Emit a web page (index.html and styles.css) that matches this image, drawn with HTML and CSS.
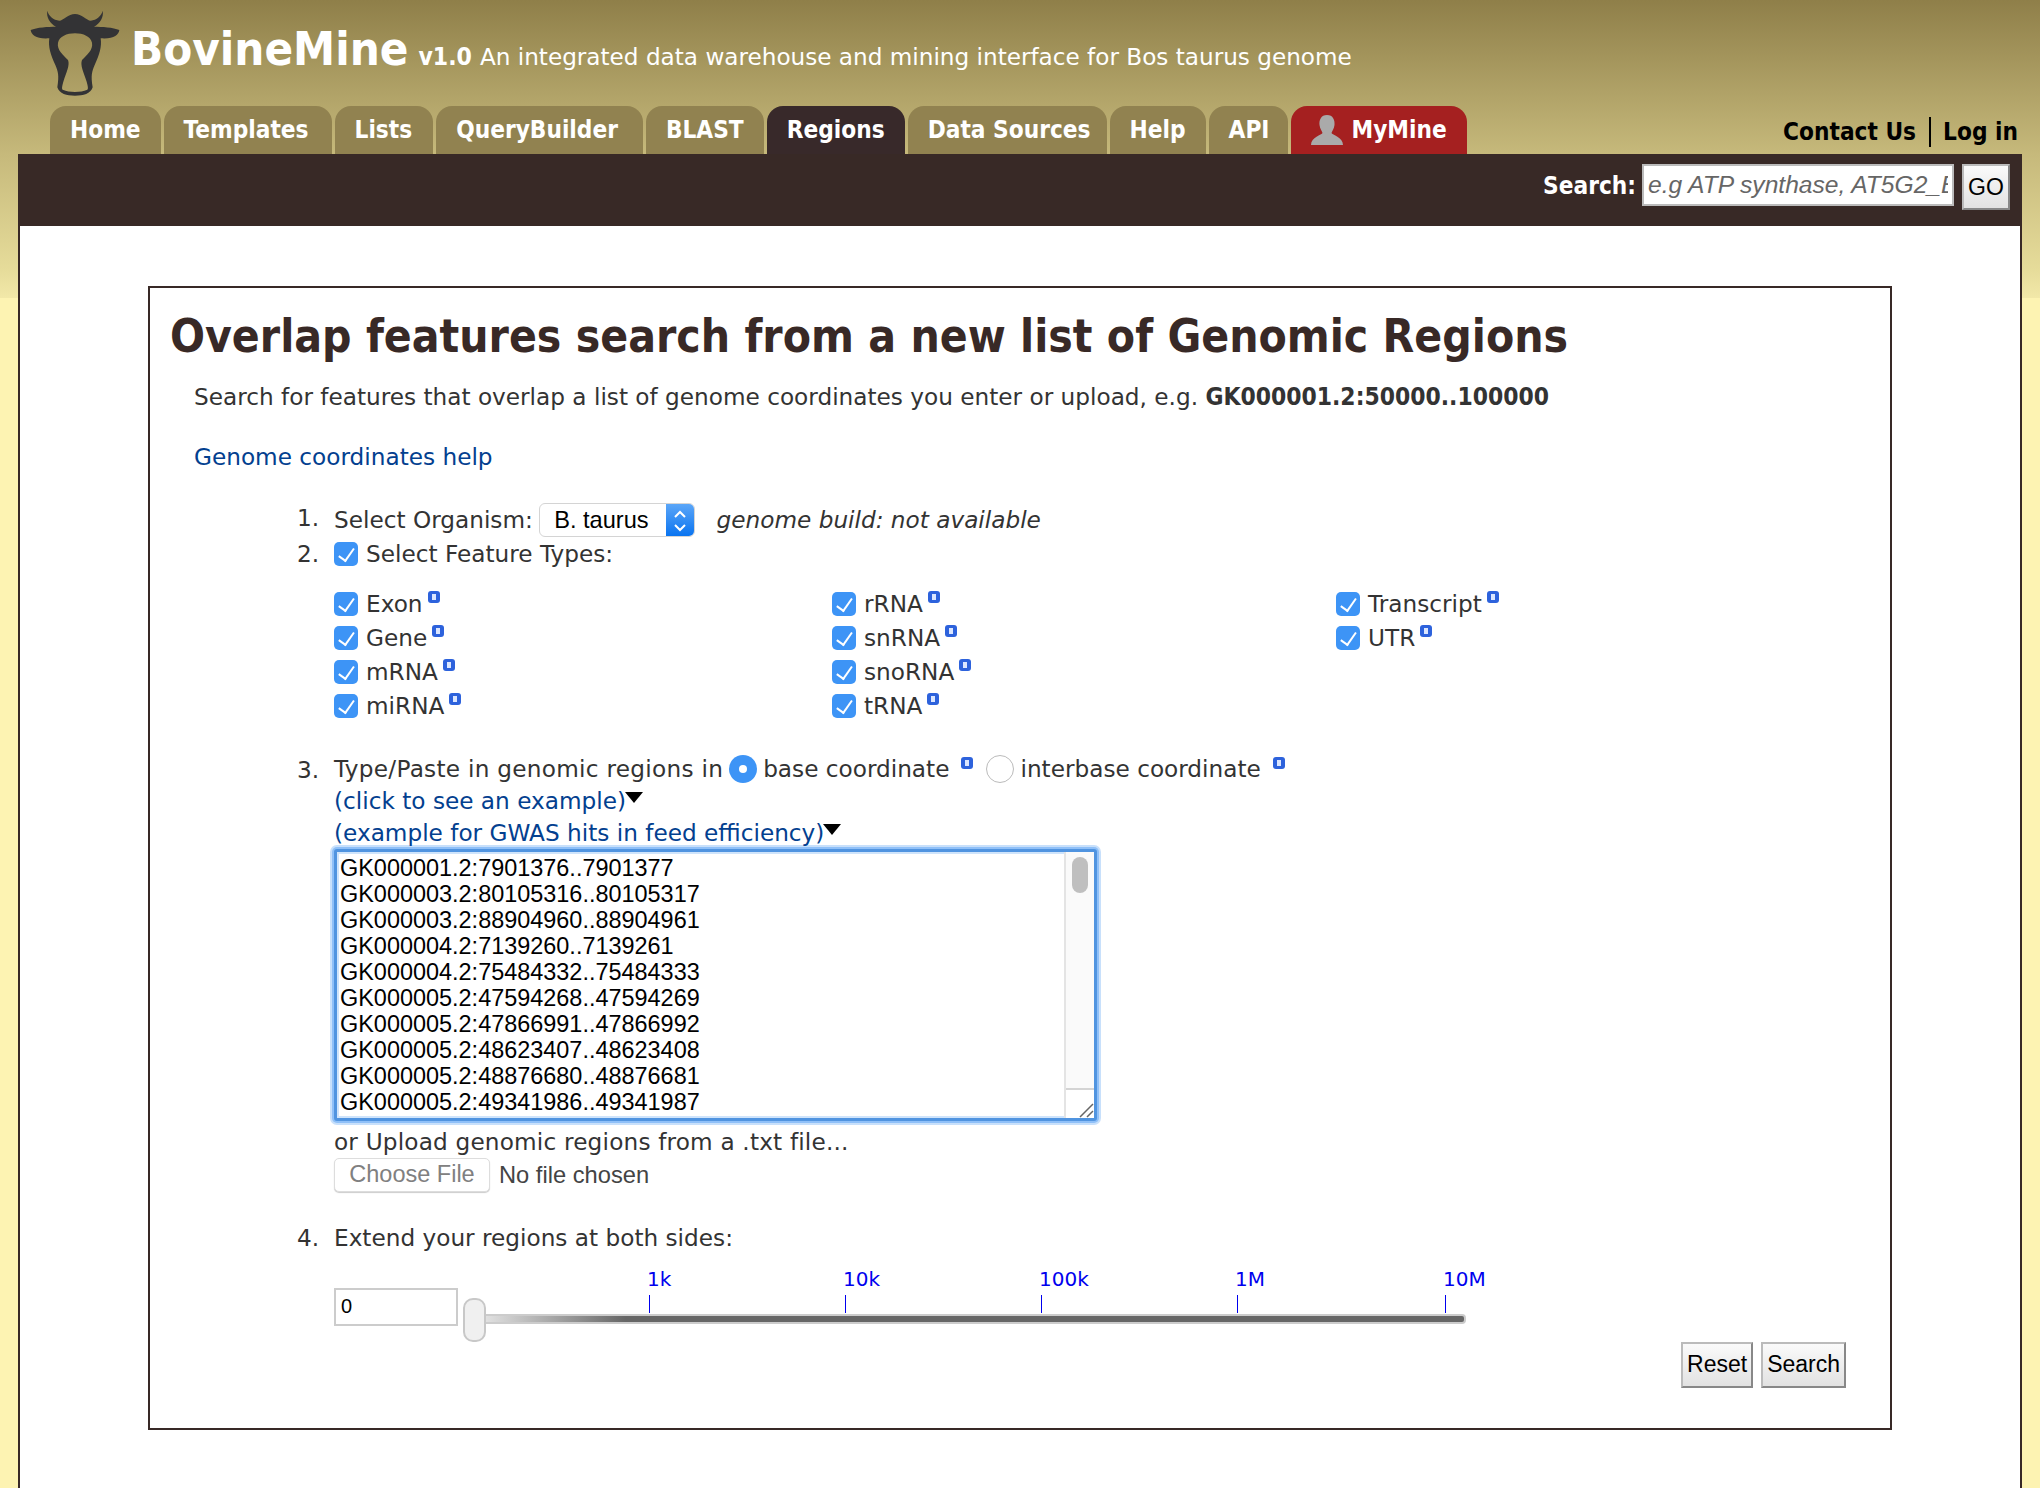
FILE: index.html
```html
<!DOCTYPE html>
<html lang="en">
<head>
    <meta charset="UTF-8">
    <title>BovineMine: Regions</title>
    <link rel="stylesheet" href="styles.css">
</head>
<body>
    <header class="brand">
        <svg class="logo" viewBox="90 30 270 258" aria-label="BovineMine logo">
            <path fill-rule="evenodd" fill="#333335" d="M142 32C146 48 160 60 178 62C190 62 205 42 225 42C245 42 260 62 272 62C290 60 304 48 308 32C312 52 300 70 282 80C305 80 340 82 358 90C356 105 340 118 302 115C306 140 298 165 284 195C276 215 272 225 278 262C272 282 250 287 225 287C200 287 178 282 172 262C178 225 174 215 166 195C152 165 144 140 148 115C110 118 94 105 92 90C110 82 145 80 168 80C150 70 138 52 142 32ZM225 100C200 100 178 110 174 128C170 150 190 165 204 180C210 195 200 215 190 245C186 260 184 268 190 270C205 278 245 278 260 270C266 268 264 260 260 245C250 215 240 195 246 180C260 165 280 150 276 128C272 110 250 100 225 100Z"/>
        </svg>
        <h1 class="site-name">BovineMine</h1>
        <span class="version">v1.0</span>
        <span class="tagline">An integrated data warehouse and mining interface for Bos taurus genome</span>
    </header>

    <nav class="nav-row">
        <ul id="tabs">
            <li><a href="#">Home</a></li>
            <li class="tab-templates"><a href="#">Templates</a></li>
            <li class="tab-lists"><a href="#">Lists</a></li>
            <li class="tab-qb"><a href="#">QueryBuilder</a></li>
            <li><a href="#">BLAST</a></li>
            <li class="active"><a href="#">Regions</a></li>
            <li class="tab-sources"><a href="#">Data Sources</a></li>
            <li><a href="#">Help</a></li>
            <li class="tab-api"><a href="#">API</a></li>
            <li class="mymine">
                <a href="#">
                    <svg class="user-icon" viewBox="0 0 32 30"><path fill="#aaa" d="M16 0C22 0 24 5 23.500 10C23 14 21 16 20.500 18C21 20 32 22 32 30H0C0 22 11 20 11.500 18C11 16 9 14 8.500 10C8 5 10 0 16 0Z"/></svg>
                    MyMine
                </a>
            </li>
        </ul>
        <div class="user-links">
            <a href="#" class="contact">Contact Us</a>
            <a href="#" class="login">Log in</a>
        </div>
    </nav>

    <div class="search-bar">
        <label for="quick">Search:</label>
        <input id="quick" type="text" value="e.g ATP synthase, AT5G2_BGIOSGA">
        <button class="btn go">GO</button>
    </div>

    <main class="content">
        <section class="panel">
            <h2>Overlap features search from a new list of Genomic Regions</h2>
            <p class="intro">Search for features that overlap a list of genome coordinates you enter or upload, e.g. <b>GK000001.2:50000..100000</b></p>
            <p class="help"><a href="#">Genome coordinates help</a></p>

            <ol class="steps">
                <li class="step-one">
                    <span>Select Organism:</span>
                    <div class="select">
                        <span class="select-text">B. taurus</span>
                        <span class="select-arrow">
                            <svg viewBox="0 0 28 34"><path d="M9 13L14 8L19 13M9 21L14 26L19 21" fill="none" stroke="#fff" stroke-width="2"/></svg>
                        </span>
                    </div>
                    <i>genome build: not available</i>
                </li>
                <li class="step-two">
                    <label class="check-row"><input type="checkbox" checked>Select Feature Types:</label>
                    <div class="features">
                        <div class="feature-col first">
                            <label class="check-row"><input type="checkbox" checked>Exon<span class="info"></span></label>
                            <label class="check-row"><input type="checkbox" checked>Gene<span class="info"></span></label>
                            <label class="check-row"><input type="checkbox" checked>mRNA<span class="info"></span></label>
                            <label class="check-row"><input type="checkbox" checked>miRNA<span class="info"></span></label>
                        </div>
                        <div class="feature-col second">
                            <label class="check-row"><input type="checkbox" checked>rRNA<span class="info"></span></label>
                            <label class="check-row"><input type="checkbox" checked>snRNA<span class="info"></span></label>
                            <label class="check-row"><input type="checkbox" checked>snoRNA<span class="info"></span></label>
                            <label class="check-row"><input type="checkbox" checked>tRNA<span class="info"></span></label>
                        </div>
                        <div class="feature-col">
                            <label class="check-row"><input type="checkbox" checked>Transcript<span class="info"></span></label>
                            <label class="check-row"><input type="checkbox" checked>UTR<span class="info"></span></label>
                        </div>
                    </div>
                </li>
                <li class="step-three">
                    <div class="coord-row">
                        <span class="coord-label">Type/Paste in genomic regions in</span>
                        <input class="radio" type="radio" name="coord" checked>
                        <span>base coordinate</span><span class="info wide"></span>
                        <input class="radio" type="radio" name="coord">
                        <span>interbase coordinate</span><span class="info wide"></span>
                    </div>
                    <div class="example"><a href="#">(click to see an example)</a><span class="arrow"></span></div>
                    <div class="example"><a href="#">(example for GWAS hits in feed efficiency)</a><span class="arrow"></span></div>
                    <div class="regions">
                        <div class="regions-text">
                            <div>GK000001.2:7901376..7901377</div>
                            <div>GK000003.2:80105316..80105317</div>
                            <div>GK000003.2:88904960..88904961</div>
                            <div>GK000004.2:7139260..7139261</div>
                            <div>GK000004.2:75484332..75484333</div>
                            <div>GK000005.2:47594268..47594269</div>
                            <div>GK000005.2:47866991..47866992</div>
                            <div>GK000005.2:48623407..48623408</div>
                            <div>GK000005.2:48876680..48876681</div>
                            <div>GK000005.2:49341986..49341987</div>
                        </div>
                        <div class="scroll">
                            <div class="scroll-track"><div class="scroll-thumb"></div></div>
                            <div class="resizer">
                                <svg viewBox="0 0 16 16"><path d="M2 15L15 2M9 15L15 9" stroke="#666" stroke-width="1.500"/></svg>
                            </div>
                        </div>
                    </div>
                    <div class="upload-text">or Upload genomic regions from a .txt file...</div>
                    <div class="upload">
                        <button class="choose" disabled>Choose File</button>
                        <span>No file chosen</span>
                    </div>
                </li>
                <li class="step-four">
                    <div>Extend your regions at both sides:</div>
                    <div class="slider">
                        <input class="extend" type="text" value="0">
                        <div class="track"></div>
                        <div class="handle"></div>
                        <div class="tick" style="left: 315px"><span>1k</span></div>
                        <div class="tick" style="left: 511px"><span>10k</span></div>
                        <div class="tick" style="left: 707px"><span>100k</span></div>
                        <div class="tick" style="left: 903px"><span>1M</span></div>
                        <div class="tick" style="left: 1111px"><span>10M</span></div>
                    </div>
                </li>
            </ol>

            <div class="actions">
                <button class="btn">Reset</button>
                <button class="btn">Search</button>
            </div>
        </section>
    </main>
</body>
</html>
```

FILE: styles.css
```css
* {
    box-sizing: border-box;
}
html, body {
    height: 100%;
}
body {
    margin: 0;
    height: 1488px;
    overflow: hidden;
    display: flex;
    flex-direction: column;
    background: linear-gradient(#8f7f49 0, #c6b97b 154px, #e6dc9a 270px, #f2e8a8 298px, #fdf3b2 298px);
    font-family: "DejaVu Sans", sans-serif;
    color: #333;
    font-size: 23.2px;
}
a {
    text-decoration: none;
}

/* top of page */
.brand {
    height: 106px;
    display: flex;
    align-items: baseline;
    padding: 18px 0 0 30px;
    color: #fff;
}
.logo {
    flex: none;
    align-self: flex-start;
    width: 90px;
    height: 86px;
    margin: -8px 11px 0 0;
}
.site-name {
    margin: 0;
    font-family: "DejaVu Sans Condensed", "DejaVu Sans", sans-serif;
    font-size: 47px;
    font-weight: bold;
    line-height: 62px;
}
.version {
    margin-left: 10px;
    font-family: "DejaVu Sans Condensed", "DejaVu Sans", sans-serif;
    font-size: 24.5px;
    font-weight: bold;
}
.tagline {
    margin-left: 8px;
    font-size: 23.15px;
}

.nav-row {
    height: 48px;
    display: flex;
    justify-content: space-between;
    padding: 0 22px 0 50px;
}
#tabs {
    display: flex;
    gap: 3px;
    margin: 0;
    padding: 0;
    list-style: none;
}
#tabs li {
    background: #918250;
    border-radius: 16px 16px 0 0;
}
#tabs a {
    display: flex;
    align-items: center;
    gap: 8px;
    height: 48px;
    padding: 0 20px;
    color: #fff;
    font-family: "DejaVu Sans Condensed", "DejaVu Sans", sans-serif;
    font-size: 24.2px;
    font-weight: bold;
}
#tabs .tab-templates a {
    padding-right: 23px;
}
#tabs .tab-lists a {
    padding-right: 21px;
}
#tabs .tab-qb a {
    padding-right: 25px;
}
#tabs .tab-sources a {
    padding-right: 16px;
}
#tabs .tab-api a {
    padding-right: 19px;
}
#tabs li.active {
    background: #38292a;
}
#tabs li.mymine {
    background: #a52020;
}
.user-icon {
    width: 32px;
    height: 30px;
}
.user-links {
    display: flex;
    align-items: center;
    padding-top: 3px;
    font-family: "DejaVu Sans Condensed", "DejaVu Sans", sans-serif;
    font-size: 24.2px;
    font-weight: bold;
    line-height: 30px;
}
.user-links a {
    color: #000;
}
.contact {
    padding-right: 13px;
    border-right: 2px solid #000;
}
.login {
    padding-left: 12px;
}

.search-bar {
    height: 72px;
    margin: 0 18px;
    background: #382926;
    display: flex;
    justify-content: flex-end;
    align-items: flex-start;
    padding: 10px 12px 0 0;
    color: #fff;
}
.search-bar label {
    font-family: "DejaVu Sans Condensed", "DejaVu Sans", sans-serif;
    font-size: 24.2px;
    font-weight: bold;
    line-height: 44px;
    margin-right: 6px;
}
.search-bar input {
    width: 312px;
    height: 42px;
    border: 2px solid #bbb;
    padding: 0 4px;
    margin-right: 8px;
    background: #fff;
    color: #666;
    font-family: "Liberation Sans", sans-serif;
    font-style: italic;
    font-size: 24.6px;
}
.btn {
    height: 46px;
    padding: 0 4px;
    border: 2px solid;
    border-color: #bbb #888 #888 #bbb;
    background: linear-gradient(#fafafa, #e2e2e2);
    color: #000;
    font-family: "Liberation Sans", sans-serif;
    font-size: 23px;
}
.go {
    width: 48px;
}

.content {
    flex: 1;
    margin: 0 18px;
    background: #fff;
    border-left: 2px solid #382926;
    border-right: 2px solid #382926;
    padding: 60px 128px 0 128px;
}

/* main form box */
.panel {
    height: 1144px;
    border: 2px solid #382926;
    padding: 19px 0 0 20px;
}
h2 {
    margin: 0;
    font-family: "DejaVu Sans Condensed", "DejaVu Sans", sans-serif;
    font-size: 45.8px;
    line-height: 58px;
    color: #382926;
}
.intro {
    margin: 16px 0 0 24px;
    line-height: 32px;
}
.intro b {
    font-family: "DejaVu Sans Condensed", "DejaVu Sans", sans-serif;
    font-size: 24.4px;
}
.help {
    margin: 28px 0 0 24px;
    line-height: 32px;
}
.help a, .example a {
    color: #03408f;
}
.steps {
    counter-reset: step;
    list-style: none;
    margin: 28px 0 0;
    padding: 0 0 0 164px;
    line-height: 34px;
}
.steps > li {
    counter-increment: step;
    position: relative;
}
.steps > li::before {
    content: counter(step) ".";
    position: absolute;
    left: -37px;
    top: 0;
}
.step-one > span, .step-one > i {
    vertical-align: middle;
}
.select {
    display: inline-flex;
    vertical-align: middle;
    width: 156px;
    height: 34px;
    margin: 0 14px 0 -1px;
    border-radius: 6px;
    border: 1px solid #d4d4d4;
    background: #fff;
    overflow: hidden;
    color: #000;
    font-family: "Liberation Sans", sans-serif;
    font-size: 23.6px;
}
.select-text {
    flex: 1;
    padding-left: 14px;
    line-height: 32px;
}
.select-arrow {
    width: 28px;
    background: linear-gradient(#5ba6f8, #0a74f0);
}
.select-arrow svg {
    display: block;
    width: 28px;
    height: 34px;
}
.check-row {
    display: flex;
    align-items: center;
    height: 34px;
}
.check-row input {
    appearance: none;
    position: relative;
    flex: none;
    width: 24px;
    height: 24px;
    margin: 0 8px 0 0;
    border-radius: 5px;
    background: #3d94f6;
}
.check-row input::after {
    content: "";
    position: absolute;
    left: 8px;
    top: 3px;
    width: 7px;
    height: 14px;
    border: solid #fff;
    border-width: 0 2px 2px 0;
    transform: rotate(35deg);
}
.info {
    flex: none;
    position: relative;
    align-self: flex-start;
    width: 12px;
    height: 12px;
    margin: 4px 0 0 5px;
    border-radius: 3px;
    background: #2d62dc;
}
.info::after {
    content: "";
    position: absolute;
    left: 4px;
    top: 3px;
    width: 4px;
    height: 6px;
    background: #dbe6ff;
}
.features {
    display: flex;
    margin-top: 16px;
}
.feature-col {
    width: 504px;
}
.feature-col.first {
    width: 498px;
}
.step-three {
    margin-top: 30px;
}
.coord-row {
    display: flex;
    align-items: center;
    height: 32px;
}
.coord-label {
    letter-spacing: .27px;
}
.radio {
    appearance: none;
    flex: none;
    width: 28px;
    height: 28px;
    margin: 0 6px;
    border-radius: 50%;
    border: 1px solid #bbb;
    background: #fff;
    position: relative;
}
.radio:checked {
    border: 0;
    background: #3d94f6;
}
.radio:checked::after {
    content: "";
    position: absolute;
    left: 10px;
    top: 10px;
    width: 8px;
    height: 8px;
    border-radius: 50%;
    background: #fff;
}
.info.wide {
    margin: 4px 7px 0 12px;
    align-self: flex-start;
}
.example {
    display: flex;
    height: 32px;
    line-height: 32px;
}
.arrow {
    width: 0;
    height: 0;
    margin: 7px 0 0 -1px;
    border: 9px solid transparent;
    border-top: 11px solid #000;
    border-bottom: 0;
}
.regions {
    display: flex;
    width: 763px;
    height: 272px;
    border: 3px solid #5094e0;
    border-radius: 3px;
    box-shadow: 0 0 0 2px #8fc0f8, 0 0 0 4px #c8e0fb, inset 0 0 0 2px #cfe4fb;
    background: #fff;
}
.regions-text {
    flex: 1;
    padding: 3px 0 0 3px;
    color: #000;
    font-family: "Liberation Sans", sans-serif;
    font-size: 23.45px;
    line-height: 26px;
    white-space: nowrap;
    overflow: hidden;
}
.scroll {
    flex: none;
    width: 30px;
    display: flex;
    flex-direction: column;
    border-left: 2px solid #e4e4e4;
    background: #fafafa;
}
.scroll-track {
    flex: 1;
    padding: 5px 6px;
}
.scroll-thumb {
    width: 16px;
    height: 36px;
    border-radius: 8px;
    background: #bfbfbf;
}
.resizer {
    height: 30px;
    border-top: 2px solid #d4d4d4;
    background: #fff;
    display: flex;
    justify-content: flex-end;
    align-items: flex-end;
}
.resizer svg {
    width: 16px;
    height: 16px;
}
.upload-text {
    margin-top: 4px;
    line-height: 33px;
    letter-spacing: .18px;
}
.upload {
    display: flex;
    align-items: center;
    height: 34px;
    font-family: "Liberation Sans", sans-serif;
    font-size: 23.7px;
    color: #444;
}
.choose {
    width: 156px;
    height: 34px;
    margin-right: 9px;
    border: 1px solid #ddd;
    border-radius: 5px;
    background: #fff;
    color: #808080;
    font-family: "Liberation Sans", sans-serif;
    font-size: 23.5px;
    box-shadow: 0 1px 1px #ccc;
}
.step-four {
    margin-top: 29px;
}

/* slider: ticks sit at their value along the track */
.slider {
    position: relative;
    height: 88px;
}
.extend {
    position: absolute;
    left: 0;
    top: 33px;
    width: 124px;
    height: 38px;
    border: 2px solid #ccc;
    padding: 0 5px;
    font-family: "Liberation Sans", sans-serif;
    font-size: 20px;
    color: #000;
}
.track {
    position: absolute;
    left: 130px;
    top: 59px;
    width: 1002px;
    height: 10px;
    border: 2px solid #ccc;
    border-radius: 4px;
    background: linear-gradient(90deg, #f2f2f2 0, #666 16%);
}
.handle {
    position: absolute;
    left: 129px;
    top: 43px;
    width: 23px;
    height: 44px;
    border: 2px solid #c8c8c8;
    border-radius: 10px;
    background: #f0f0f0;
}
.tick {
    position: absolute;
    top: 40px;
    width: 1px;
    height: 18px;
    background: #0000ee;
}
.tick span {
    position: absolute;
    left: -2px;
    top: -28px;
    color: #0000ee;
    font-size: 20px;
    line-height: 24px;
}
.actions {
    display: flex;
    justify-content: flex-end;
    gap: 8px;
    margin-top: -1px;
    padding-right: 44px;
}
```
